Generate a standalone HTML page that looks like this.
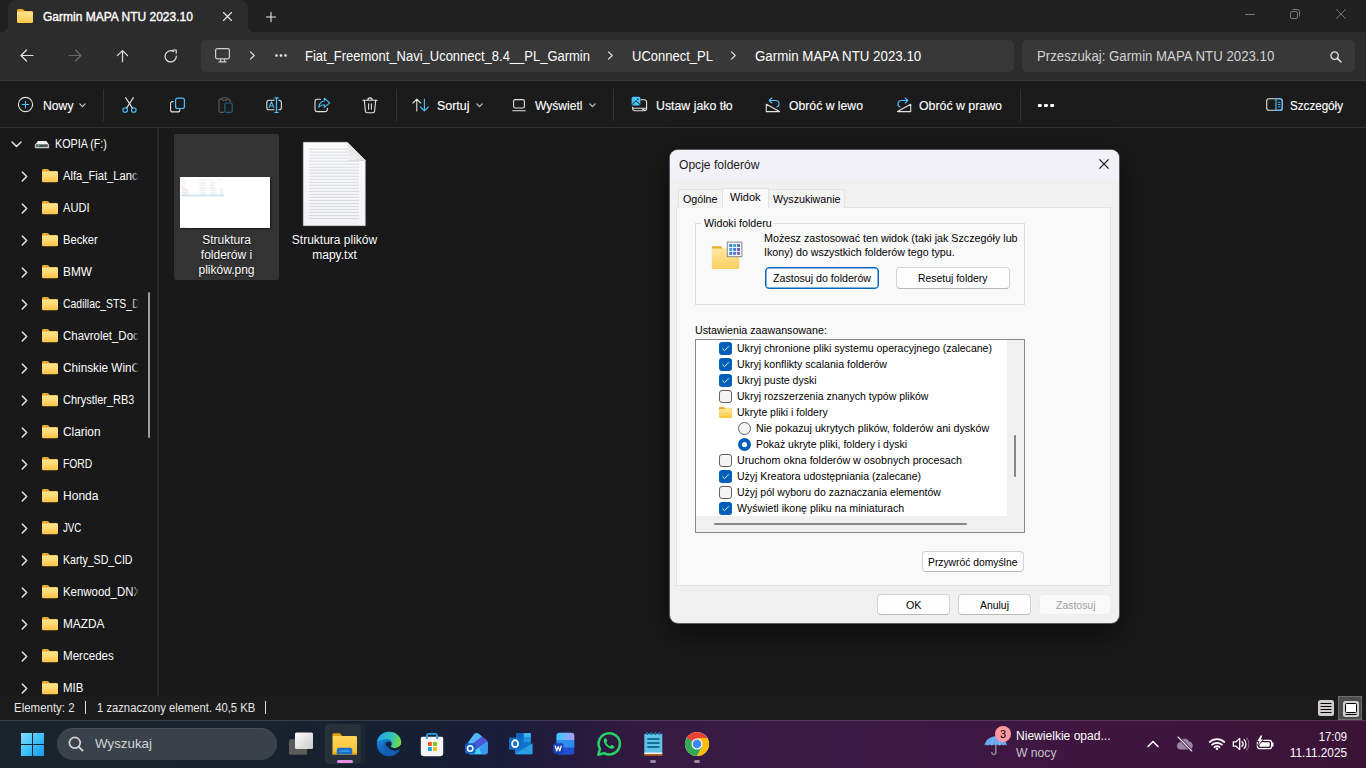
<!DOCTYPE html>
<html lang="pl">
<head>
<meta charset="utf-8">
<title>Garmin MAPA NTU 2023.10</title>
<style>
*{box-sizing:border-box;margin:0;padding:0}
html,body{width:1366px;height:768px;overflow:hidden;background:#191919}
body{position:relative;font-family:"Liberation Sans",sans-serif;color:#fff;font-size:12px;-webkit-font-smoothing:antialiased}
.abs{position:absolute}
.t{position:absolute;white-space:nowrap;line-height:1;transform-origin:0 0}
svg{position:absolute;overflow:visible}
/* chrome */
#titlebar{left:0;top:0;width:1366px;height:32px;background:#202020}
#tab{left:8px;top:0;width:240px;height:32px;background:#2c2c2c;border-radius:8px 8px 0 0}
#nav{left:0;top:32px;width:1366px;height:48px;background:#2c2c2c}
#navline{left:0;top:80px;width:1366px;height:1px;background:#3b3b3b}
#addr{left:201px;top:40px;width:813px;height:32px;background:#383838;border-radius:5px}
#search{left:1022px;top:40px;width:333px;height:32px;background:#383838;border-radius:5px}
#cmd{left:0;top:81px;width:1366px;height:46px;background:#1b1b1b}
#cmdline{left:0;top:127px;width:1366px;height:1px;background:#333}
.sep{position:absolute;top:89px;width:1px;height:32px;background:#333}
.ct{font-size:12.5px;top:100px;color:#fff;-webkit-text-stroke:.12px #fff}
.at{font-size:14px;top:49px;color:#fff}
/* sidebar */
#side{left:0;top:128px;width:158px;height:569px;background:#191919;overflow:hidden}
#sidediv{left:157px;top:128px;width:2px;height:568px;background:#2a2a2a}
.row{position:absolute;left:0;width:139px;height:32px;overflow:hidden}
.row .t{font-size:12px;left:63px;top:10px}
.ft{font-size:12px;text-align:center;color:#fff;text-shadow:0 1px 1px rgba(0,0,0,.8)}
.ft span{display:inline-block}
.st{font-size:12px;top:702px;color:#e8e8e8}
/* status */
#status{left:0;top:696px;width:1366px;height:24px;background:#1b1b1b}
/* taskbar */
#taskbar{left:0;top:720px;width:1366px;height:48px;background:linear-gradient(90deg,#1a242c 0%,#18222d 20%,#161f33 30%,#1a1d3a 37%,#251a3d 42%,#341a41 47%,#3a1a44 55%,#3d1743 70%,#3e153e 85%,#3a1437 100%)}
#taskline{left:0;top:720px;width:1366px;height:1px;background:rgba(255,255,255,.14)}
/* dialog */
#dlg{left:670px;top:150px;width:448.5px;height:473px;background:#f0f0f0;border-radius:8px;box-shadow:0 0 0 1px #5c5c5c,0 10px 30px rgba(0,0,0,.55);color:#000;overflow:hidden}
#dlg .t{color:#000}
#dlg .d{font-size:11.8px}
.btn{position:absolute;background:#fdfdfd;border:1px solid #d2d2d2;border-bottom-color:#b9b9b9;border-radius:4px}
.li{position:absolute;left:0;height:16px;width:311px}
</style>
</head>
<body>
<!-- TITLE BAR -->
<div class="abs" id="titlebar"></div>
<div class="abs" id="tab"></div>
<div class="abs" id="nav"></div>
<svg style="left:2px;top:26px" width="6" height="6"><path d="M6 0v6H0A6 6 0 0 0 6 0z" fill="#2c2c2c"/></svg><svg style="left:248px;top:26px" width="6" height="6"><path d="M0 0v6h6A6 6 0 0 1 0 0z" fill="#2c2c2c"/></svg>
<div class="abs" id="navline"></div>
<div class="abs" id="addr"></div>
<div class="abs" id="search"></div>
<div class="abs" id="cmd"></div>
<div class="abs" id="cmdline"></div>
<svg width="0" height="0"><defs>
<linearGradient id="fg" x1="0" y1="0" x2="0" y2="1"><stop offset="0" stop-color="#ffe594"/><stop offset="1" stop-color="#f9c744"/></linearGradient>
<symbol id="folder" viewBox="0 0 16 14" preserveAspectRatio="none"><path d="M0 1.6C0 .7.7 0 1.6 0h3.6c.5 0 .9.2 1.2.5L7.8 2h6.6c.9 0 1.6.7 1.6 1.6V5H0z" fill="#efa920"/><rect x="0" y="2.6" width="16" height="11.4" rx="1.5" fill="url(#fg)"/></symbol>
<symbol id="chev" viewBox="0 0 8 12"><path d="M1.5 1l5 5-5 5" fill="none" stroke="#dedede" stroke-width="1.700" stroke-linecap="round" stroke-linejoin="round"/></symbol>
</defs></svg>
<svg style="left:17px;top:9px" width="16" height="14"><use href="#folder"/></svg>
<div class="t" id="tabtitle" style="left:43px;top:11px;font-size:12px;color:#fff;-webkit-text-stroke:.35px #fff;transform:scaleX(1.0)">Garmin MAPA NTU 2023.10</div>
<svg style="left:222.500px;top:11.500px" width="9" height="9"><path d="M.5.500l8 8M8.500.5L.5 8.500" stroke="#e6e6e6" stroke-width="1.1" fill="none" stroke-linecap="round"/></svg>
<svg style="left:265.500px;top:11.500px" width="10" height="10"><path d="M5 .3v9.400M.3 5h9.400" stroke="#e6e6e6" stroke-width="1.1" fill="none" stroke-linecap="round"/></svg>
<svg style="left:1245px;top:14px" width="10" height="2"><path d="M0 .5h10" stroke="#7a7a7a" stroke-width="1"/></svg>
<svg style="left:1290px;top:9px" width="10" height="10"><rect x=".5" y="2.5" width="7" height="7" rx="1.5" fill="none" stroke="#7a7a7a"/><path d="M2.5 .5h5a2 2 0 0 1 2 2v5" fill="none" stroke="#7a7a7a"/></svg>
<svg style="left:1336px;top:9px" width="10" height="10"><path d="M.3.3l9.4 9.4M9.7.3L.3 9.7" stroke="#7a7a7a" stroke-width="1" fill="none"/></svg>

<svg style="left:20px;top:49px" width="14" height="13"><path d="M13 6.5H1M6.5 1L1 6.5 6.5 12" stroke="#e4e4e4" stroke-width="1.2" fill="none" stroke-linecap="round" stroke-linejoin="round"/></svg>
<svg style="left:68px;top:49px" width="14" height="13"><path d="M1 6.5h12M7.5 1L13 6.5 7.5 12" stroke="#6a6a6a" stroke-width="1.2" fill="none" stroke-linecap="round" stroke-linejoin="round"/></svg>
<svg style="left:116px;top:49px" width="13" height="14"><path d="M6.5 12.700V1.700M1.400 6.700L6.5 1.600 11.600 6.700" stroke="#e4e4e4" stroke-width="1.2" fill="none" stroke-linecap="round" stroke-linejoin="round"/></svg>
<svg style="left:164px;top:49px" width="14" height="14"><path d="M12.3 6.8A5.6 5.6 0 1 1 9.6 2.1M9 .6h3.2v3.2" transform="translate(0 .4)" stroke="#e4e4e4" stroke-width="1.2" fill="none" stroke-linecap="round" stroke-linejoin="round"/></svg>
<svg style="left:215px;top:48px" width="15" height="15"><rect x=".6" y=".6" width="13.8" height="10.3" rx="1.8" fill="none" stroke="#cfcfcf" stroke-width="1.2"/><path d="M3.5 13.9h8M5.6 11v2.8M9.4 11v2.8" stroke="#cfcfcf" stroke-width="1.1" fill="none"/></svg>
<svg style="left:249px;top:50px" width="7" height="11"><path d="M1.500 1.800L5.200 5.500 1.500 9.200" fill="none" stroke="#e4e4e4" stroke-width="1.2" stroke-linecap="round" stroke-linejoin="round"/></svg>
<svg style="left:275px;top:53.500px" width="13" height="3"><rect x=".2" y=".3" width="2.500" height="2.400" rx=".9" fill="#ececec"/><rect x="4.700" y=".3" width="2.500" height="2.400" rx=".9" fill="#ececec"/><rect x="9.200" y=".3" width="2.500" height="2.400" rx=".9" fill="#ececec"/></svg>
<div class="t at" id="a1" style="left:305px;transform:scaleX(0.927)">Fiat_Freemont_Navi_Uconnect_8.4__PL_Garmin</div>
<svg style="left:607px;top:50px" width="7" height="11"><path d="M1.500 1.800L5.200 5.500 1.500 9.200" fill="none" stroke="#e4e4e4" stroke-width="1.2" stroke-linecap="round" stroke-linejoin="round"/></svg>
<div class="t at" id="a2" style="left:632px;transform:scaleX(0.929)">UConnect_PL</div>
<svg style="left:730px;top:50px" width="7" height="11"><path d="M1.500 1.800L5.200 5.500 1.500 9.200" fill="none" stroke="#e4e4e4" stroke-width="1.2" stroke-linecap="round" stroke-linejoin="round"/></svg>
<div class="t at" id="a3" style="left:755px;transform:scaleX(0.951)">Garmin MAPA NTU 2023.10</div>
<div class="t at" id="a4" style="left:1037px;color:#d2d2d2;transform:scaleX(0.945)">Przeszukaj: Garmin MAPA NTU 2023.10</div>
<svg style="left:1330px;top:50.500px" width="12" height="12"><circle cx="4.600" cy="4.600" r="3.700" fill="none" stroke="#e4e4e4" stroke-width="1.300"/><path d="M7.400 7.400l3.600 3.600" stroke="#e4e4e4" stroke-width="1.500" stroke-linecap="round"/></svg>

<svg style="left:17px;top:96px" width="17" height="17"><circle cx="8.5" cy="8.5" r="7.100" fill="none" stroke="#e2e2e2" stroke-width="1.1"/><path d="M8.5 5.200v6.600M5.200 8.5h6.600" stroke="#4cc2ff" stroke-width="1.1" stroke-linecap="round"/></svg>
<div class="t ct" id="c1" style="left:42.5px;transform:scaleX(0.976)">Nowy</div>
<svg style="left:79px;top:103px" width="7" height="5"><path d="M.8 .9L3.5 3.600 6.200 .9" fill="none" stroke="#c4c4c4" stroke-width="1.250" stroke-linecap="round" stroke-linejoin="round"/></svg>
<div class="sep" style="left:103px"></div>
<svg style="left:122px;top:97px" width="15" height="16"><path d="M3.6 .6L10.6 11.4M11.4 .6L4.4 11.4" stroke="#e2e2e2" stroke-width="1.1" fill="none" stroke-linecap="round"/><circle cx="3.2" cy="13" r="2.3" fill="none" stroke="#4cc2ff" stroke-width="1.1"/><circle cx="11.8" cy="13" r="2.3" fill="none" stroke="#4cc2ff" stroke-width="1.1"/></svg>
<svg style="left:170px;top:96.500px" width="16" height="16"><path d="M3.2 4.6H2.6a2 2 0 0 0-2 2v6.3a2 2 0 0 0 2 2h5.2a2 2 0 0 0 2-2v-.5" fill="none" stroke="#e2e2e2" stroke-width="1.1" stroke-linecap="round"/><rect x="5.6" y="1.2" width="8.8" height="10.3" rx="2" fill="none" stroke="#4cc2ff" stroke-width="1.2"/></svg>
<svg style="left:218px;top:97px" width="16" height="17"><path d="M6 15.4H2.6a1.6 1.6 0 0 1-1.6-1.6V3.6A1.6 1.6 0 0 1 2.600 2H4M9 2h1.400a1.600 1.600 0 0 1 1.600 1.600V5" fill="none" stroke="#5e5e5e" stroke-width="1.1"/><rect x="3.8" y=".7" width="5.400" height="2.600" rx="1.200" fill="none" stroke="#5e5e5e" stroke-width="1.100"/><rect x="6.8" y="6" width="7.400" height="9.400" rx="1.500" fill="none" stroke="#235f80" stroke-width="1.200"/></svg>
<svg style="left:265px;top:96px" width="17" height="18"><path d="M9.200 4.200H4.200a2.400 2.400 0 0 0-2.400 2.400v4.800a2.400 2.400 0 0 0 2.400 2.400H9.200M13.800 4.200h.2a2.400 2.400 0 0 1 2.400 2.400v4.800a2.400 2.400 0 0 1-2.400 2.400h-.2" fill="none" stroke="#e2e2e2" stroke-width="1.100" stroke-linecap="round"/><path d="M11.500 2.200v14M9.800 1.900h3.400M9.800 16.500h3.400" stroke="#4cc2ff" stroke-width="1.200" stroke-linecap="round"/><path d="M3.900 11.900L6.500 5.700 9.100 11.900M4.800 9.900h3.400" fill="none" stroke="#4cc2ff" stroke-width="1.050" stroke-linejoin="round"/></svg>
<svg style="left:314px;top:97px" width="17" height="16"><path d="M6.500 2.200H3.400A2.400 2.400 0 0 0 1 4.600v7.600a2.400 2.400 0 0 0 2.400 2.400h7.600a2.400 2.400 0 0 0 2.400-2.400v-1" fill="none" stroke="#e2e2e2" stroke-width="1.100" stroke-linecap="round"/><path d="M10.300 1.200l5.400 4.600-5.400 4.600V7.700c-2.600 0-4.300.8-5.500 2.400.3-3 2-5.600 5.500-6.100z" fill="none" stroke="#4cc2ff" stroke-width="1.100" stroke-linejoin="round"/></svg>
<svg style="left:362px;top:97px" width="16" height="17"><path d="M.8 3.300h14.400M5.800 3.100a2.200 2.200 0 0 1 4.400 0M2.300 3.500l1.100 10.600a1.800 1.800 0 0 0 1.800 1.600h5.600a1.800 1.800 0 0 0 1.800-1.600l1.100-10.600M6.600 6.800v5.400M9.400 6.800v5.400" fill="none" stroke="#e2e2e2" stroke-width="1.100" stroke-linecap="round"/></svg>
<div class="sep" style="left:396px"></div>
<svg style="left:412px;top:98px" width="18" height="14"><path d="M4.800 13V1.200M.9 5L4.800 1.100 8.700 5" fill="none" stroke="#e2e2e2" stroke-width="1.100" stroke-linecap="round" stroke-linejoin="round"/><path d="M12.400 1v11.800M8.500 9l3.900 3.900L16.300 9" fill="none" stroke="#4cc2ff" stroke-width="1.100" stroke-linecap="round" stroke-linejoin="round"/></svg>
<div class="t ct" id="c2" style="left:437px;transform:scaleX(0.995)">Sortuj</div>
<svg style="left:475.5px;top:103px" width="7" height="5"><path d="M.8 .9L3.5 3.600 6.200 .9" fill="none" stroke="#c4c4c4" stroke-width="1.250" stroke-linecap="round" stroke-linejoin="round"/></svg>
<svg style="left:512px;top:98px" width="14" height="14"><rect x="1.600" y="1.600" width="10.800" height="8.400" rx="1.600" fill="none" stroke="#e2e2e2" stroke-width="1.100"/><path d="M.8 12.800h12.400" stroke="#e2e2e2" stroke-width="1.100" stroke-linecap="round"/></svg>
<div class="t ct" id="c3" style="left:535px;transform:scaleX(0.966)">Wyświetl</div>
<svg style="left:589px;top:103px" width="7" height="5"><path d="M.8 .9L3.5 3.600 6.200 .9" fill="none" stroke="#c4c4c4" stroke-width="1.250" stroke-linecap="round" stroke-linejoin="round"/></svg>
<div class="sep" style="left:613px"></div>
<svg style="left:631px;top:96px" width="17" height="16"><path d="M10 3.800h3.400a2.200 2.200 0 0 1 2.200 2.200v6.600a2.200 2.200 0 0 1-2.200 2.200H3.800a2.200 2.200 0 0 1-2.200-2.200v-1.400M1.800 12.200h13.600M11.600 13.500h1.600" fill="none" stroke="#e2e2e2" stroke-width="1.100" stroke-linecap="round"/><rect x=".6" y=".8" width="8.800" height="8.800" rx="1.600" fill="#4cc2ff"/><path d="M.9 8.600L5 4.800l4.200 3.900" fill="none" stroke="#1c1c1c" stroke-width="1"/><circle cx="6.800" cy="3.200" r=".8" fill="#1c1c1c"/></svg>
<div class="t ct" id="c4" style="left:656px;transform:scaleX(0.986)">Ustaw jako tło</div>
<svg style="left:765px;top:97px" width="16" height="16"><path d="M1.300 7.300v7.300h13.200z" fill="none" stroke="#e2e2e2" stroke-width="1.100" stroke-linejoin="round"/><path d="M4.300 3.500h6.400a3.300 3.300 0 0 1 1.200 6.400M6.800 1L4.200 3.500l2.600 2.500" fill="none" stroke="#4cc2ff" stroke-width="1.100" stroke-linecap="round" stroke-linejoin="round"/></svg>
<div class="t ct" id="c5" style="left:788.5px;transform:scaleX(0.977)">Obróć w lewo</div>
<svg style="left:896px;top:97px" width="16" height="16"><path d="M14.700 7.300v7.300H1.500z" fill="none" stroke="#e2e2e2" stroke-width="1.100" stroke-linejoin="round"/><path d="M11.700 3.500H5.300a3.300 3.300 0 0 0-1.200 6.400M9.200 1l2.600 2.500L9.200 6" fill="none" stroke="#4cc2ff" stroke-width="1.100" stroke-linecap="round" stroke-linejoin="round"/></svg>
<div class="t ct" id="c6" style="left:919px;transform:scaleX(0.987)">Obróć w prawo</div>
<div class="sep" style="left:1020px"></div>
<svg style="left:1037px;top:103px" width="18" height="5"><rect x=".8" y="1" width="4" height="3" rx="1.300" fill="#fff"/><rect x="7" y="1" width="4" height="3" rx="1.300" fill="#fff"/><rect x="13.200" y="1" width="4" height="3" rx="1.300" fill="#fff"/></svg>
<svg style="left:1266px;top:98px" width="17" height="13"><rect x=".7" y=".7" width="15.600" height="11.600" rx="2.400" fill="none" stroke="#e2e2e2" stroke-width="1.100"/><path d="M10 .8h4a2.300 2.300 0 0 1 2.300 2.300v6.800a2.300 2.300 0 0 1-2.300 2.300h-4z" fill="none" stroke="#4cc2ff" stroke-width="1.100"/><path d="M11.800 4.300h2.600M11.800 6.500h2.600M11.800 8.700h2.600" stroke="#4cc2ff" stroke-width=".9"/></svg>
<div class="t ct" id="c7" style="left:1290px;transform:scaleX(0.93)">Szczegóły</div>
<!-- SIDEBAR -->
<div class="abs" id="side">
<div class="row" style="top:0"><svg style="left:11px;top:13px" width="11" height="7"><path d="M1 1l4.500 4.500L10 1" fill="none" stroke="#e2e2e2" stroke-width="1.500" stroke-linecap="round" stroke-linejoin="round"/></svg>
<svg style="left:34px;top:12px" width="16" height="9"><path d="M4 .9h8.400L14.600 4.200H1.400z" fill="#f1f1f1"/><rect x=".9" y="3.900" width="14.200" height="4.400" rx=".6" fill="#c4c4c4"/><rect x="2.200" y="4.500" width="11.500" height="2.400" fill="#4c4c4c"/><circle cx="4.500" cy="5.700" r=".85" fill="#3de05a"/></svg>
<div class="t" style="left:55px;transform:scaleX(0.895)">KOPIA (F:)</div></div>
<div class="row" style="top:32px"><svg style="left:21px;top:11px" width="7" height="11"><use href="#chev"/></svg><svg style="left:42px;top:9px" width="16" height="13.400"><use href="#folder"/></svg><div class="t" style="transform:scaleX(0.931)">Alfa_Fiat_Lancia</div></div>
<div class="row" style="top:64px"><svg style="left:21px;top:11px" width="7" height="11"><use href="#chev"/></svg><svg style="left:42px;top:9px" width="16" height="13.400"><use href="#folder"/></svg><div class="t" style="transform:scaleX(0.924)">AUDI</div></div>
<div class="row" style="top:96px"><svg style="left:21px;top:11px" width="7" height="11"><use href="#chev"/></svg><svg style="left:42px;top:9px" width="16" height="13.400"><use href="#folder"/></svg><div class="t" style="transform:scaleX(0.932)">Becker</div></div>
<div class="row" style="top:128px"><svg style="left:21px;top:11px" width="7" height="11"><use href="#chev"/></svg><svg style="left:42px;top:9px" width="16" height="13.400"><use href="#folder"/></svg><div class="t" style="transform:scaleX(0.985)">BMW</div></div>
<div class="row" style="top:160px"><svg style="left:21px;top:11px" width="7" height="11"><use href="#chev"/></svg><svg style="left:42px;top:9px" width="16" height="13.400"><use href="#folder"/></svg><div class="t" style="transform:scaleX(0.871)">Cadillac_STS_DVD</div></div>
<div class="row" style="top:192px"><svg style="left:21px;top:11px" width="7" height="11"><use href="#chev"/></svg><svg style="left:42px;top:9px" width="16" height="13.400"><use href="#folder"/></svg><div class="t" style="transform:scaleX(0.954)">Chavrolet_Docu</div></div>
<div class="row" style="top:224px"><svg style="left:21px;top:11px" width="7" height="11"><use href="#chev"/></svg><svg style="left:42px;top:9px" width="16" height="13.400"><use href="#folder"/></svg><div class="t" style="transform:scaleX(0.979)">Chinskie WinCE</div></div>
<div class="row" style="top:256px"><svg style="left:21px;top:11px" width="7" height="11"><use href="#chev"/></svg><svg style="left:42px;top:9px" width="16" height="13.400"><use href="#folder"/></svg><div class="t" style="transform:scaleX(0.916)">Chrystler_RB3</div></div>
<div class="row" style="top:288px"><svg style="left:21px;top:11px" width="7" height="11"><use href="#chev"/></svg><svg style="left:42px;top:9px" width="16" height="13.400"><use href="#folder"/></svg><div class="t" style="transform:scaleX(0.986)">Clarion</div></div>
<div class="row" style="top:320px"><svg style="left:21px;top:11px" width="7" height="11"><use href="#chev"/></svg><svg style="left:42px;top:9px" width="16" height="13.400"><use href="#folder"/></svg><div class="t" style="transform:scaleX(0.862)">FORD</div></div>
<div class="row" style="top:352px"><svg style="left:21px;top:11px" width="7" height="11"><use href="#chev"/></svg><svg style="left:42px;top:9px" width="16" height="13.400"><use href="#folder"/></svg><div class="t" style="transform:scaleX(1.004)">Honda</div></div>
<div class="row" style="top:384px"><svg style="left:21px;top:11px" width="7" height="11"><use href="#chev"/></svg><svg style="left:42px;top:9px" width="16" height="13.400"><use href="#folder"/></svg><div class="t" style="transform:scaleX(0.812)">JVC</div></div>
<div class="row" style="top:416px"><svg style="left:21px;top:11px" width="7" height="11"><use href="#chev"/></svg><svg style="left:42px;top:9px" width="16" height="13.400"><use href="#folder"/></svg><div class="t" style="transform:scaleX(0.883)">Karty_SD_CID</div></div>
<div class="row" style="top:448px"><svg style="left:21px;top:11px" width="7" height="11"><use href="#chev"/></svg><svg style="left:42px;top:9px" width="16" height="13.400"><use href="#folder"/></svg><div class="t" style="transform:scaleX(0.951)">Kenwood_DNX</div></div>
<div class="row" style="top:480px"><svg style="left:21px;top:11px" width="7" height="11"><use href="#chev"/></svg><svg style="left:42px;top:9px" width="16" height="13.400"><use href="#folder"/></svg><div class="t" style="transform:scaleX(0.986)">MAZDA</div></div>
<div class="row" style="top:512px"><svg style="left:21px;top:11px" width="7" height="11"><use href="#chev"/></svg><svg style="left:42px;top:9px" width="16" height="13.400"><use href="#folder"/></svg><div class="t" style="transform:scaleX(0.964)">Mercedes</div></div>
<div class="row" style="top:544px"><svg style="left:21px;top:11px" width="7" height="11"><use href="#chev"/></svg><svg style="left:42px;top:9px" width="16" height="13.400"><use href="#folder"/></svg><div class="t" style="transform:scaleX(0.952)">MIB</div></div>
<div class="abs" style="left:148px;top:164px;width:2px;height:146px;background:#9d9d9d;border-radius:1px"></div>
</div>
<div class="abs" id="sidefade" style="left:132px;top:160px;width:7px;height:537px;background:linear-gradient(90deg,rgba(25,25,25,0),#191919)"></div>
<div class="abs" id="sidediv"></div>
<div class="abs" style="left:174px;top:134px;width:105px;height:146px;background:#333;border-radius:2px"></div>
<div class="abs" style="left:180px;top:177px;width:90px;height:51px;background:#fff;box-shadow:1px 1px 1.500px rgba(0,0,0,.55)"></div>
<svg style="left:180px;top:177px" width="90" height="51"><g fill="#dfe6f2"><rect x="1.300" y="2.200" width="2.500" height=".8"/><rect x="19.500" y="2.200" width="6.500" height=".8"/><rect x="30" y="2.200" width="2" height=".8"/><rect x="38.800" y="2.200" width="3.200" height=".8"/></g><g fill="#f8e3a4"><rect x="1.300" y="4.4" width="1.600" height="1"/><rect x="1.300" y="6.4" width="1.600" height="1"/><rect x="1.300" y="8.3" width="1.600" height="1"/><rect x="1.300" y="10.3" width="1.600" height="1"/></g><g fill="#e6e8ec"><rect x="3.200" y="4.5" width="1.800" height=".8"/><rect x="19.500" y="4.5" width="6.300" height=".8"/><rect x="30" y="4.5" width="5" height=".8"/><rect x="3.200" y="6.5" width="1.800" height=".8"/><rect x="19.500" y="6.5" width="6.300" height=".8"/><rect x="30" y="6.5" width="5" height=".8"/><rect x="3.200" y="8.4" width="1.800" height=".8"/><rect x="19.500" y="8.4" width="6.300" height=".8"/><rect x="30" y="8.4" width="5" height=".8"/><rect x="3.200" y="10.4" width="1.800" height=".8"/><rect x="19.500" y="10.4" width="6.300" height=".8"/><rect x="30" y="10.4" width="5" height=".8"/><rect x="1.800" y="11.6" width="5.5" height=".8" fill="#d8dadf"/><rect x="19.500" y="11.6" width="6.300" height=".8"/><rect x="30" y="11.6" width="6.600" height=".8"/><rect x="39.200" y="11.6" width="4.200" height=".8"/><rect x="1.800" y="13.4" width="7" height=".8" fill="#d8dadf"/><rect x="19.500" y="13.4" width="6.300" height=".8"/><rect x="30" y="13.4" width="6.600" height=".8"/><rect x="39.200" y="13.4" width="4.200" height=".8"/><rect x="1.800" y="15.4" width="6.5" height=".8" fill="#d8dadf"/><rect x="19.500" y="15.4" width="6.300" height=".8"/><rect x="30" y="15.4" width="6.600" height=".8"/><rect x="39.200" y="15.4" width="4.200" height=".8"/><rect x="1.800" y="16.8" width="4" height=".8" fill="#d8dadf"/><rect x="19.500" y="16.8" width="6.300" height=".8"/><rect x="30" y="16.8" width="6.600" height=".8"/><rect x="39.200" y="16.8" width="4.200" height=".8"/></g><rect x="1.200" y="17.500" width="42.800" height="1.900" fill="#d4e8fb"/><rect x="2" y="18.100" width="7.500" height=".8" fill="#c8d4e4"/><rect x="19.500" y="18.100" width="6.300" height=".8" fill="#d2dcea"/><rect x="30" y="18.100" width="6.600" height=".8" fill="#d2dcea"/><rect x="41" y="18.100" width="2.600" height=".8" fill="#d2dcea"/><rect x="1" y="49.800" width="6" height=".7" fill="#e3e6ec"/></svg>
<div class="t ft" id="f1" style="left:174px;width:105px;top:234px">Struktura</div>
<div class="t ft" id="f2" style="left:174px;width:105px;top:249px">folderów i</div>
<div class="t ft" id="f3" style="left:174px;width:105px;top:264px">plików.png</div>
<svg style="left:303px;top:142px" width="63" height="84"><defs><linearGradient id="pg" x1="0" y1="0" x2="0" y2="1"><stop offset="0" stop-color="#fbfbfc"/><stop offset="1" stop-color="#f3f3f5"/></linearGradient><linearGradient id="fold" x1="0" y1="1" x2="1" y2="0"><stop offset="0" stop-color="#f6f6f6"/><stop offset=".5" stop-color="#e4e4e4"/><stop offset="1" stop-color="#cfcfcf"/></linearGradient><clipPath id="pgc"><path d="M0 0h44L56 12v72H0z"/></clipPath></defs><path d="M.3.300h44L62.300 18.300v65.400H.3z" fill="url(#pg)" stroke="#d9d9d9" stroke-width=".5"/><g clip-path="url(#pgc)"><rect x="6.200" y="6.60" width="50.300" height="1" fill="#d6dadd"/><rect x="6.200" y="9.62" width="50.300" height="1" fill="#d6dadd"/><rect x="6.200" y="12.64" width="50.300" height="1" fill="#d6dadd"/><rect x="6.200" y="15.66" width="50.300" height="1" fill="#d6dadd"/><rect x="6.200" y="18.68" width="50.300" height="1" fill="#d6dadd"/><rect x="6.200" y="21.70" width="50.300" height="1" fill="#d6dadd"/><rect x="6.200" y="24.72" width="50.300" height="1" fill="#d6dadd"/><rect x="6.200" y="27.74" width="50.300" height="1" fill="#d6dadd"/><rect x="6.200" y="30.76" width="50.300" height="1" fill="#d6dadd"/><rect x="6.200" y="33.78" width="50.300" height="1" fill="#d6dadd"/><rect x="6.200" y="36.80" width="50.300" height="1" fill="#d6dadd"/><rect x="6.200" y="39.82" width="50.300" height="1" fill="#d6dadd"/><rect x="6.200" y="42.84" width="50.300" height="1" fill="#d6dadd"/><rect x="6.200" y="45.86" width="50.300" height="1" fill="#d6dadd"/><rect x="6.200" y="48.88" width="50.300" height="1" fill="#d6dadd"/><rect x="6.200" y="51.90" width="50.300" height="1" fill="#d6dadd"/><rect x="6.200" y="54.92" width="50.300" height="1" fill="#d6dadd"/><rect x="6.200" y="57.94" width="50.300" height="1" fill="#d6dadd"/><rect x="6.200" y="60.96" width="50.300" height="1" fill="#d6dadd"/><rect x="6.200" y="63.98" width="50.300" height="1" fill="#d6dadd"/><rect x="6.200" y="67.00" width="50.300" height="1" fill="#d6dadd"/><rect x="6.200" y="70.02" width="50.300" height="1" fill="#d6dadd"/><rect x="6.200" y="73.04" width="50.300" height="1" fill="#d6dadd"/><rect x="6.200" y="76.06" width="50.300" height="1" fill="#d6dadd"/></g><path d="M44.300 .3v18h18z" fill="url(#fold)"/><path d="M44.300 18.300h18" stroke="#cfcfcf" stroke-width=".8"/></svg>
<div class="t ft" id="f4" style="left:282px;width:105px;top:234px">Struktura plików</div>
<div class="t ft" id="f5" style="left:282px;width:105px;top:249px">mapy.txt</div>
<div class="abs" id="status"></div>
<div class="t st" id="s1" style="left:14px;transform:scaleX(0.956)">Elementy: 2</div><div class="abs" style="left:85px;top:701px;width:1px;height:13px;background:#e0e0e0"></div>
<div class="t st" id="s2" style="left:96.500px;transform:scaleX(0.937)">1 zaznaczony element. 40,5 KB</div><div class="abs" style="left:265px;top:701px;width:1px;height:13px;background:#e0e0e0"></div>
<svg style="left:1318px;top:700px" width="16" height="16"><rect x="0" y="0" width="16" height="16" rx="2.500" fill="#cfcdcd"/><path d="M2.500 3.500h11M2.500 6.500h11M2.500 9.500h11M2.500 12.500h11" stroke="#000" stroke-width="1"/></svg>
<div class="abs" style="left:1338px;top:696px;width:24px;height:24px;background:#4d4d4d;border:1px solid #6e6e6e"></div>
<svg style="left:1343px;top:701px" width="16" height="16"><rect x="0" y="0" width="16" height="16" rx="2.500" fill="#cfcdcd"/><rect x="2.500" y="2.500" width="11" height="9" rx="1" fill="#fff" stroke="#000" stroke-width="1"/><path d="M2.500 13.500h11" stroke="#000" stroke-width="1"/></svg>
<!-- TASKBAR -->
<div class="abs" id="taskbar"></div>
<div class="abs" id="taskline"></div>
<svg style="left:21px;top:733px" width="23" height="23"><defs><linearGradient id="wl" x1="0" y1="0" x2="1" y2="1"><stop offset="0" stop-color="#86dcfd"/><stop offset=".5" stop-color="#3fc1fb"/><stop offset="1" stop-color="#1496f2"/></linearGradient></defs><path d="M0 0h11v11H0zM12 0h11v11H12zM0 12h11v11H0zM12 12h11v11H12z" fill="url(#wl)"/></svg>
<div class="abs" style="left:57px;top:728px;width:220px;height:32px;border-radius:16px;background:#39424a;box-shadow:inset 0 1px 0 rgba(255,255,255,.07)"></div>
<svg style="left:68px;top:736px" width="16" height="16"><circle cx="6.800" cy="6.800" r="5.400" fill="none" stroke="#d6d6d6" stroke-width="1.700"/><path d="M10.800 10.800l3.800 3.800" stroke="#d6d6d6" stroke-width="1.900" stroke-linecap="round"/></svg>
<div class="t" style="left:94.500px;top:737px;font-size:13.500px;color:#d4d4d4;transform:scaleX(0.989)">Wyszukaj</div>
<!-- task view -->
<svg style="left:289px;top:732px" width="25" height="24"><defs><linearGradient id="tv" x1="0" y1="0" x2="1" y2="1"><stop offset="0" stop-color="#ffffff"/><stop offset="1" stop-color="#c9c9c9"/></linearGradient></defs><rect x="0" y="7.300" width="18" height="15.400" rx="1.500" fill="#5b5b5b"/><rect x="6" y=".6" width="18" height="16.400" rx="1.500" fill="url(#tv)"/></svg>
<!-- explorer -->
<div class="abs" style="left:330px;top:724px;width:35px;height:40px;border-radius:4px;background:#1e2832"></div>
<div class="abs" style="left:325px;top:724px;width:35.500px;height:40px;border-radius:4px;background:#27313a;box-shadow:1px 0 0 #18212b"></div>
<svg style="left:332px;top:733px" width="26" height="22"><defs><linearGradient id="ex" x1="0" y1="0" x2="0" y2="1"><stop offset="0" stop-color="#ffd65a"/><stop offset="1" stop-color="#f8c133"/></linearGradient></defs><path d="M.5 1.500a1.200 1.200 0 0 1 1.200-1.200h6.300l2.200 2.700H.5z" fill="#e2a012"/><path d="M.5 3h23.300a1.200 1.200 0 0 1 1.200 1.200v16.200a1.200 1.200 0 0 1-1.200 1.200H1.700a1.200 1.200 0 0 1-1.200-1.200z" fill="url(#ex)"/><path d="M.5 19.500h24.500v.9a1.200 1.200 0 0 1-1.200 1.200H1.700a1.200 1.200 0 0 1-1.200-1.200z" fill="#e9a614"/><path d="M4.800 21.600v-4.800a2 2 0 0 1 2-2h11.400a2 2 0 0 1 2 2v4.800z" fill="#1b6fc4"/><rect x="7.500" y="17.300" width="10" height="1.600" rx=".8" fill="#3a96e6"/></svg>
<div class="abs" style="left:337px;top:760px;width:16px;height:3px;border-radius:1.500px;background:#e48fe6"></div>
<!-- edge -->
<svg style="left:376px;top:731px" width="26" height="26"><defs><linearGradient id="ed1" x1="0" y1=".3" x2="1" y2=".5"><stop offset="0" stop-color="#1ca4ea"/><stop offset=".55" stop-color="#2ec0c0"/><stop offset="1" stop-color="#74db45"/></linearGradient><linearGradient id="ed2" x1="0" y1="0" x2=".3" y2="1"><stop offset="0" stop-color="#1c8fe0"/><stop offset="1" stop-color="#0f5cb5"/></linearGradient></defs><circle cx="13" cy="13" r="12.200" fill="url(#ed2)"/><path d="M1 10.500C2.500 4.800 7.200 .8 13 .8c7 0 12.200 5 12.200 10.400 0 3.700-2.800 5.800-5.900 5.800-2.400 0-4-.9-4-2.100 0-.9.900-1.400.9-2.700 0-2.300-2.400-4.300-5.400-4.300C6.200 7.900 3 10.500 1 10.500z" fill="url(#ed1)"/><path d="M9.500 10.300c-1.700 1.700-2.400 3.800-2 5.900.6 3.100 3.200 5.500 6.600 6.300 3.900-.3 7.200-2.500 9-5.700-1.500.9-3.100 1.400-4.900 1.400-4.500 0-8.700-3.500-8.700-7.900z" fill="#125eb2"/><circle cx="12.600" cy="13.300" r="2.700" fill="#17212d"/><path d="M13.500 15.300c1.800 1.500 4 2 6 1.700 2-.3 3.800-1.400 5.300-3.200l.9 3.700-2.400 1.200c-1.600.9-3.300 1.300-5 1.300-2.700 0-5.300-1.600-6.400-4z" fill="#17212d"/><path d="M11.800 15.800c1.300 2.400 4 3.900 6.900 3.900 1.800 0 3.500-.5 5-1.400-1.800 3.200-5.100 5.300-9 5.700-2.900-.7-5.200-2.600-6.200-5.100z" fill="#125eb2"/></svg>
<!-- store -->
<svg style="left:420px;top:732px" width="24" height="24"><path d="M6.800 7V4a2.200 2.200 0 0 1 2.200-2.200h6a2.200 2.200 0 0 1 2.200 2.200v3" fill="none" stroke="#1fa8ec" stroke-width="1.800"/><path d="M.8 6.300a1.500 1.500 0 0 1 1.500-1.500h19.400a1.500 1.500 0 0 1 1.500 1.500v14.700a3.200 3.200 0 0 1-3.200 3.200H4a3.200 3.200 0 0 1-3.200-3.200z" fill="#f5f5f5"/><path d="M6.800 7V4.800M17.200 7V4.800" fill="none" stroke="#1b8fd0" stroke-width="1.800"/><rect x="8" y="10.100" width="3.800" height="3.800" fill="#f1511b"/><rect x="13.100" y="10.100" width="3.800" height="3.800" fill="#80bb0a"/><rect x="8" y="15.100" width="3.800" height="3.800" fill="#00a3ee"/><rect x="13.100" y="15.100" width="3.800" height="3.800" fill="#fdb70a"/></svg>
<!-- new outlook -->
<svg style="left:465px;top:732px" width="24" height="24"><defs><linearGradient id="no1" x1="0" y1="0" x2="1" y2="1"><stop offset="0" stop-color="#3fc8fa"/><stop offset="1" stop-color="#2a7fe8"/></linearGradient><clipPath id="noc"><path d="M3.200 10.400L9.300 1.700Q11.400 .3 13.500 1.700L21.800 8.600Q22.600 9.400 22.600 10.600V19.700a2.600 2.600 0 0 1-2.600 2.600H5.800a2.600 2.600 0 0 1-2.600-2.600z"/></clipPath></defs><g clip-path="url(#noc)"><rect width="24" height="24" fill="url(#no1)"/><path d="M4 12L16 2.500l8 5.500L10 18z" fill="#4b56d8"/><path d="M2 9L13 .5l5 3.200L5 13.500z" fill="#55b8f6"/><path d="M3 22.500L23 10v13H3z" fill="#45cdfb"/><path d="M14 15.600L23 10v13h-6z" fill="#3a86ea" opacity=".75"/></g><rect x="0" y="11.300" width="10.400" height="10.400" rx="2.200" fill="#1460c8"/><circle cx="5.200" cy="16.500" r="2.700" fill="none" stroke="#fff" stroke-width="1.600"/></svg>
<!-- outlook classic -->
<svg style="left:509px;top:732px" width="24" height="23"><rect x="7.200" y="1.100" width="14.600" height="17" rx=".6" fill="#1272cc"/><rect x="14.500" y="1.100" width="7.300" height="4.500" fill="#3cb4f3"/><rect x="14.500" y="5.600" width="7.300" height="4.500" fill="#2093e4"/><rect x="7.200" y="1.100" width="7.300" height="4.500" fill="#0f62bb"/><rect x="7.200" y="5.600" width="7.300" height="4.500" fill="#0e6fc8"/><path d="M6 11.600l9 5.600 8.400-6v9.800a1.200 1.200 0 0 1-1.200 1.200H7.200A1.200 1.200 0 0 1 6 21z" fill="#1a7fd4"/><path d="M6.400 22l17-10.800V21a1.200 1.200 0 0 1-1.200 1.200H7z" fill="#28a0ea"/><path d="M6 11.600l17.400 10.200" stroke="#1670c0" stroke-width=".6" opacity=".6"/><rect x="0" y="5.600" width="12.200" height="12.200" rx="1.200" fill="#0f6cc6"/><ellipse cx="6.100" cy="11.700" rx="3" ry="3.500" fill="none" stroke="#fff" stroke-width="1.800"/></svg>
<!-- word -->
<svg style="left:553px;top:732px" width="22" height="24"><defs><linearGradient id="wd" x1="0" y1="0" x2="1" y2="0"><stop offset="0" stop-color="#35c6fb"/><stop offset="1" stop-color="#b19cf3"/></linearGradient></defs><rect x="3.500" y=".7" width="17.800" height="22" rx="3" fill="#1e4fd0"/><path d="M3.500 3.700a3 3 0 0 1 3-3h11.800a3 3 0 0 1 3 3v4.300H3.500z" fill="url(#wd)"/><rect x="3.500" y="8" width="17.800" height="7.500" fill="#2f8cf0"/><rect x="0" y="11.300" width="10.400" height="10.400" rx="2" fill="#1a3fb4"/><path d="M2.200 14l1.500 5 1.500-4.600 1.500 4.600 1.500-5" fill="none" stroke="#fff" stroke-width="1.200" stroke-linejoin="round" stroke-linecap="round"/></svg>
<!-- whatsapp -->
<svg style="left:596px;top:731px" width="26" height="26"><path d="M13.200 2.200A10.600 10.600 0 0 0 4 18l-1.700 5.700 5.900-1.600A10.600 10.600 0 1 0 13.200 2.200z" fill="none" stroke="#25d366" stroke-width="2.500" stroke-linejoin="round"/><path d="M9.300 7.300c-.5 0-1.600.7-1.600 2.400 0 3.200 4.600 8 8.200 8 1.400 0 2.400-.9 2.400-1.700 0-.5-.1-.7-.4-.9l-2-1c-.4-.2-.7 0-1 .3l-.7.800c-1.500-.6-3.300-2.300-3.900-3.800l.8-.8c.3-.3.400-.6.200-1l-.9-1.900c-.2-.4-.5-.4-1.100-.4z" fill="#25d366"/></svg>
<!-- notepad -->
<svg style="left:644px;top:732px" width="19" height="24"><rect x=".3" y="1.800" width="18" height="19.700" rx="1" fill="#5ec3e6"/><rect x=".3" y="20.500" width="18" height="2" fill="#f4f4f4"/><rect x=".3" y="22.200" width="18" height="1.600" fill="#b55a12"/><g fill="#166f96"><rect x="2.300" y="0" width="1.800" height="3" rx=".6"/><rect x="6.400" y="0" width="1.800" height="3" rx=".6"/><rect x="10.500" y="0" width="1.800" height="3" rx=".6"/><rect x="14.600" y="0" width="1.800" height="3" rx=".6"/><rect x="3.300" y="6" width="12.200" height="2"/><rect x="3.300" y="10" width="12.200" height="2"/><rect x="3.300" y="14" width="12.200" height="2"/></g></svg>
<div class="abs" style="left:650px;top:760px;width:6px;height:3px;border-radius:1.500px;background:#948c9c"></div>
<!-- chrome -->
<svg style="left:685px;top:732px" width="24" height="24"><circle cx="12" cy="12" r="12" fill="#fff"/><path d="M12 12L1.600 6A12 12 0 0 1 22.400 6z" fill="#ea4335"/><path d="M1.600 6A12 12 0 0 0 12 24l5.200-9L12 12z" fill="#34a853"/><path d="M22.400 6H12l5.200 9L12 24A12 12 0 0 0 22.400 6z" fill="#fbbc04"/><path d="M1.600 6l5.200 9L12 12z" fill="#34a853"/><circle cx="12" cy="12" r="5.500" fill="#fff"/><circle cx="12" cy="12" r="4.400" fill="#4285f4"/></svg>
<div class="abs" style="left:694px;top:760px;width:6px;height:3px;border-radius:1.500px;background:#948c9c"></div>
<!-- weather -->
<svg style="left:984px;top:736px" width="24" height="20"><path d="M.5 9.500C1.500 4 6 .3 11.800 .3S22 4 23 9.500c-1.200-1-2.600-1-3.800 0-1.200-1-2.600-1-3.800 0-1.200-1-2.600-1-3.800 0-1.200-1-2.600-1-3.800 0-1.200-1-2.600-1-3.800 0-1.200-1-2.300-1-3.500 0z" fill="#6aa8f2"/><path d="M11.800 .3C8.500 3 7.800 6.500 7.900 9.300M11.800 .3c3.300 2.700 4 6.200 3.900 9" fill="none" stroke="#8fc1f8" stroke-width=".8"/><path d="M11.800 9v7.500a2 2 0 0 1-4 0" fill="none" stroke="#8b8790" stroke-width="1.500" stroke-linecap="round"/></svg>
<div class="abs" style="left:995px;top:726px;width:16px;height:16px;border-radius:8px;background:#ff99a4"></div>
<div class="t" style="left:1000px;top:728.500px;font-size:11px;color:#000">3</div>
<div class="t" style="left:1015.500px;top:730px;font-size:12.500px;color:#fff;transform:scaleX(0.965)">Niewielkie opad...</div>
<div class="t" style="left:1015.500px;top:747px;font-size:12.500px;color:#c9c1cd;transform:scaleX(0.972)">W nocy</div>
<!-- tray -->
<svg style="left:1147px;top:740px" width="12" height="8"><path d="M1 6.500L6 1.500l5 5" fill="none" stroke="#fff" stroke-width="1.500" stroke-linecap="round" stroke-linejoin="round"/></svg>
<svg style="left:1176px;top:735px" width="18" height="17"><path d="M4.600 14.600a3.700 3.700 0 0 1-.7-7.300 5 5 0 0 1 9.300-.9 4.200 4.200 0 0 1 .5 8.200z" fill="#9b85a1"/><path d="M2 2l13.800 14" stroke="#3d1540" stroke-width="2.600" stroke-linecap="round"/><path d="M2 2l13.800 14" stroke="#ece6ee" stroke-width="1.100" stroke-linecap="round"/></svg>
<svg style="left:1208px;top:737px" width="18" height="13"><path d="M1.700 5a10.600 10.600 0 0 1 14.600 0M4.100 7.700a7.200 7.200 0 0 1 9.800 0M6.500 10.200a3.800 3.800 0 0 1 5 0" fill="none" stroke="#fff" stroke-width="1.750" stroke-linecap="round"/><circle cx="9" cy="11.700" r="1.200" fill="#fff"/></svg>
<svg style="left:1232px;top:737px" width="18" height="14"><path d="M1.300 4.800h2.800L7.700 1.400v11.200L4.100 9.200H1.300z" fill="none" stroke="#fff" stroke-width="1.300" stroke-linejoin="round"/><path d="M10 4.600a3.500 3.500 0 0 1 0 4.800M12.200 2.600a6.400 6.400 0 0 1 0 8.800" fill="none" stroke="#fff" stroke-width="1.300" stroke-linecap="round"/><path d="M14.600 .9a9 9 0 0 1 0 12.200" fill="none" stroke="#7e6a84" stroke-width="1.100" stroke-linecap="round"/></svg>
<svg style="left:1256px;top:735px" width="18" height="15"><rect x="1.400" y="5.300" width="14.200" height="8.400" rx="2.200" fill="none" stroke="#fff" stroke-width="1.300"/><rect x="3.300" y="7.200" width="10.400" height="4.600" rx=".8" fill="#fff"/><path d="M16.700 8v3" stroke="#fff" stroke-width="1.600" stroke-linecap="round"/><path d="M4.600 .4L1.300 6.200h2.200L2 10.200 7 4.400H4.700L6.300 .4z" fill="#3c1539" stroke="#3c1539" stroke-width="1.600" stroke-linejoin="round"/><path d="M4.600 .4L1.300 6.200h2.200L2 10.200 7 4.400H4.700L6.300 .4z" fill="#fff"/></svg>
<div class="t" style="left:1247px;width:100px;text-align:right;top:730.500px;font-size:12px;color:#fff;transform-origin:100% 0;transform:scaleX(0.939)">17:09</div>
<div class="t" style="left:1247px;width:100px;text-align:right;top:746.500px;font-size:12px;color:#fff;transform-origin:100% 0;transform:scaleX(0.982)">11.11.2025</div>
<!-- DIALOG -->
<div class="abs" id="dlg">
<div class="abs" style="left:0;top:0;width:449px;height:30px;background:#f2f1f7"></div>
<div class="t" style="left:9px;top:9px;font-size:12px;color:#1a1a1a;transform:scaleX(1.006)">Opcje folderów</div>
<svg style="left:429px;top:9px" width="10" height="10"><path d="M.4.400l9.200 9.200M9.600.4L.4 9.600" stroke="#111" stroke-width="1.150" fill="none"/></svg>
<div class="abs" style="left:6px;top:57px;width:435px;height:379px;background:#f9f9f9;border:1px solid #e3e3e3"></div>
<div class="abs" style="left:8px;top:39px;width:45px;height:19px;background:#f3f3f3;border:1px solid #e3e3e3;border-bottom:none"></div>
<div class="abs" style="left:98px;top:39px;width:77px;height:19px;background:#f3f3f3;border:1px solid #e3e3e3;border-bottom:none"></div>
<div class="abs" style="left:52px;top:37.5px;width:46.500px;height:20.500px;background:#f9f9f9;border:1px solid #e3e3e3;border-bottom:none"></div>
<div class="t d" style="left:13px;top:44px;transform:scaleX(0.907)">Ogólne</div>
<div class="t d" style="left:59.5px;top:42px;transform:scaleX(0.931)">Widok</div>
<div class="t d" style="left:103px;top:44px;transform:scaleX(0.904)">Wyszukiwanie</div>
<div class="abs" style="left:25px;top:73px;width:330px;height:82px;border:1px solid #dcdcdc"></div>
<div class="abs" style="left:31px;top:67px;width:73px;height:12px;background:#f9f9f9"></div>
<div class="t d" style="left:34px;top:68px;transform:scaleX(0.906)">Widoki folderu</div>
<svg style="left:41px;top:91px" width="32" height="29"><defs><linearGradient id="df" x1="0" y1="0" x2="0" y2="1"><stop offset="0" stop-color="#ffe9a6"/><stop offset="1" stop-color="#f8cd5c"/></linearGradient></defs><path d="M.8 6.500a1.200 1.200 0 0 1 1.200-1.200h8l2.400 2.800H.8z" fill="#ecb02a"/><rect x=".8" y="7.400" width="27.500" height="20.600" rx="1.200" fill="url(#df)"/><rect x="16.3" y="1.1" width="14.600" height="14.600" fill="#f4f4f4" stroke="#8a8a8a" stroke-width="1"/><rect x="18.3" y="3.1" width="2.900" height="2.900" fill="#3f7fd0"/><rect x="22.2" y="3.1" width="2.900" height="2.900" fill="#3aa0d8"/><rect x="26.1" y="3.1" width="2.900" height="2.900" fill="#4a6fd0"/><rect x="18.3" y="7.0" width="2.900" height="2.900" fill="#3aa0d8"/><rect x="22.2" y="7.0" width="2.900" height="2.900" fill="#3f7fd0"/><rect x="26.1" y="7.0" width="2.900" height="2.900" fill="#6a5fc8"/><rect x="18.3" y="10.9" width="2.900" height="2.900" fill="#3f7fd0"/><rect x="22.2" y="10.9" width="2.900" height="2.900" fill="#5a6fd0"/><rect x="26.1" y="10.9" width="2.900" height="2.900" fill="#7a5fc0"/></svg>
<div class="t d" style="left:94.3px;top:83px;transform:scaleX(0.91)">Możesz zastosować ten widok (taki jak Szczegóły lub</div>
<div class="t d" style="left:94.3px;top:97px;transform:scaleX(0.903)">Ikony) do wszystkich folderów tego typu.</div>
<div class="btn" style="left:95px;top:117px;width:114.0px;height:21.5px;border:1px solid #0067c0;box-shadow:inset 0 0 0 .5px #0067c0"></div><div class="t d" style="left:103.0px;top:122.75px;color:#000;transform:scaleX(0.9)">Zastosuj do folderów</div>
<div class="btn" style="left:226px;top:117px;width:114.0px;height:21.5px;"></div><div class="t d" style="left:248.25px;top:122.75px;color:#000;transform:scaleX(0.883)">Resetuj foldery</div>
<div class="t d" style="left:25px;top:175px;transform:scaleX(0.906)">Ustawienia zaawansowane:</div>
<div class="abs" style="left:25px;top:189px;width:330px;height:194px;background:#f0f0f0;border:1px solid #828790"></div>
<div class="abs" id="lv" style="left:26px;top:190px;width:311px;height:175.500px;background:#fff;overflow:hidden">
<div class="li" style="top:1px"><svg style="left:23px;top:1px" width="13" height="13"><rect width="13" height="13" rx="3" fill="#005fb8"/><path d="M3.600 6.800l1.900 1.900 4-4" fill="none" stroke="#eef4fb" stroke-width="1" stroke-linecap="round" stroke-linejoin="round"/></svg><div class="t d" style="left:41.0px;top:2.400px;transform:scaleX(0.894)">Ukryj chronione pliki systemu operacyjnego (zalecane)</div></div>
<div class="li" style="top:17px"><svg style="left:23px;top:1px" width="13" height="13"><rect width="13" height="13" rx="3" fill="#005fb8"/><path d="M3.600 6.800l1.900 1.900 4-4" fill="none" stroke="#eef4fb" stroke-width="1" stroke-linecap="round" stroke-linejoin="round"/></svg><div class="t d" style="left:41.0px;top:2.400px;transform:scaleX(0.897)">Ukryj konflikty scalania folderów</div></div>
<div class="li" style="top:33px"><svg style="left:23px;top:1px" width="13" height="13"><rect width="13" height="13" rx="3" fill="#005fb8"/><path d="M3.600 6.800l1.900 1.900 4-4" fill="none" stroke="#eef4fb" stroke-width="1" stroke-linecap="round" stroke-linejoin="round"/></svg><div class="t d" style="left:41.0px;top:2.400px;transform:scaleX(0.893)">Ukryj puste dyski</div></div>
<div class="li" style="top:49px"><svg style="left:23px;top:1px" width="13" height="13"><rect x=".5" y=".5" width="12" height="12" rx="2.500" fill="#f4f4f4" stroke="#5f5f5f"/></svg><div class="t d" style="left:41.0px;top:2.400px;transform:scaleX(0.893)">Ukryj rozszerzenia znanych typów plików</div></div>
<div class="li" style="top:65px"><svg style="left:23px;top:2px" width="13" height="11"><use href="#folder"/></svg><div class="t d" style="left:41.0px;top:2.400px;transform:scaleX(0.886)">Ukryte pliki i foldery</div></div>
<div class="li" style="top:81px"><svg style="left:42px;top:1px" width="13" height="13"><circle cx="6.500" cy="6.500" r="6" fill="#f4f4f4" stroke="#5f5f5f"/></svg><div class="t d" style="left:60.0px;top:2.400px;transform:scaleX(0.907)">Nie pokazuj ukrytych plików, folderów ani dysków</div></div>
<div class="li" style="top:97px"><svg style="left:42px;top:1px" width="13" height="13"><circle cx="6.500" cy="6.500" r="6.500" fill="#005fb8"/><circle cx="6.500" cy="6.500" r="2.600" fill="#fff"/></svg><div class="t d" style="left:60.0px;top:2.400px;transform:scaleX(0.889)">Pokaż ukryte pliki, foldery i dyski</div></div>
<div class="li" style="top:113px"><svg style="left:23px;top:1px" width="13" height="13"><rect x=".5" y=".5" width="12" height="12" rx="2.500" fill="#f4f4f4" stroke="#5f5f5f"/></svg><div class="t d" style="left:41.0px;top:2.400px;transform:scaleX(0.908)">Uruchom okna folderów w osobnych procesach</div></div>
<div class="li" style="top:129px"><svg style="left:23px;top:1px" width="13" height="13"><rect width="13" height="13" rx="3" fill="#005fb8"/><path d="M3.600 6.800l1.900 1.900 4-4" fill="none" stroke="#eef4fb" stroke-width="1" stroke-linecap="round" stroke-linejoin="round"/></svg><div class="t d" style="left:41.0px;top:2.400px;transform:scaleX(0.891)">Użyj Kreatora udostępniania (zalecane)</div></div>
<div class="li" style="top:145px"><svg style="left:23px;top:1px" width="13" height="13"><rect x=".5" y=".5" width="12" height="12" rx="2.500" fill="#f4f4f4" stroke="#5f5f5f"/></svg><div class="t d" style="left:41.0px;top:2.400px;transform:scaleX(0.891)">Użyj pól wyboru do zaznaczania elementów</div></div>
<div class="li" style="top:161px"><svg style="left:23px;top:1px" width="13" height="13"><rect width="13" height="13" rx="3" fill="#005fb8"/><path d="M3.600 6.800l1.900 1.900 4-4" fill="none" stroke="#eef4fb" stroke-width="1" stroke-linecap="round" stroke-linejoin="round"/></svg><div class="t d" style="left:41.0px;top:2.400px;transform:scaleX(0.898)">Wyświetl ikonę pliku na miniaturach</div></div>
</div>
<div class="abs" style="left:344px;top:285px;width:2px;height:42px;background:#868686;border-radius:1px"></div>
<div class="abs" style="left:44px;top:373px;width:253px;height:2px;background:#868686;border-radius:1px"></div>
<div class="btn" style="left:251.5px;top:401.3px;width:102.2px;height:20.4px;"></div><div class="t d" style="left:257.9px;top:406.5px;color:#000;transform:scaleX(0.874)">Przywróć domyślne</div>
<div class="btn" style="left:207.4px;top:444.4px;width:72.2px;height:20.4px;"></div><div class="t d" style="left:235.75px;top:449.6px;color:#000;transform:scaleX(0.909)">OK</div>
<div class="btn" style="left:288.2px;top:444.4px;width:72.5px;height:20.4px;"></div><div class="t d" style="left:309.95px;top:449.6px;color:#000;transform:scaleX(0.884)">Anuluj</div>
<div class="btn" style="left:369.3px;top:444.4px;width:72.1px;height:20.4px;background:#f9f9f9;border-color:#ececec;"></div><div class="t d" style="left:385.6px;top:449.6px;color:#a0a0a0;transform:scaleX(0.886)">Zastosuj</div>
</div>
</body>
</html>
